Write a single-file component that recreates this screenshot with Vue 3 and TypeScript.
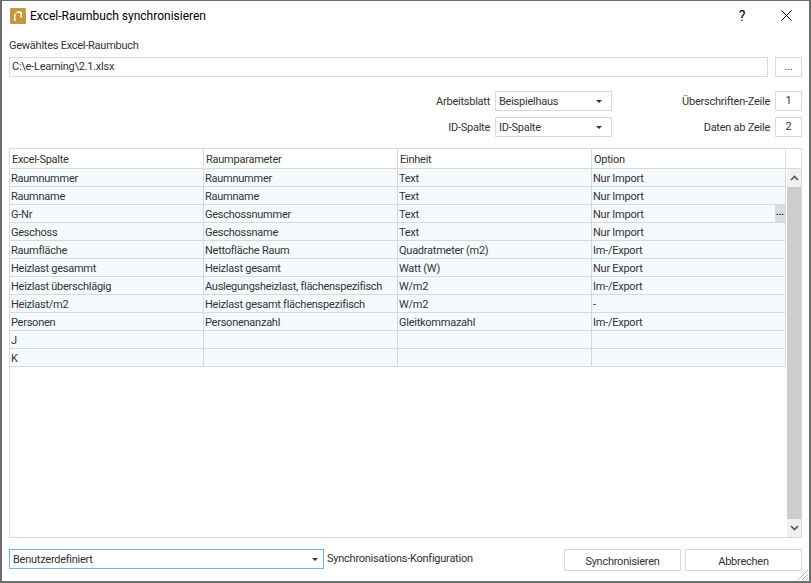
<script setup lang="ts">
const columns = ['Excel-Spalte', 'Raumparameter', 'Einheit', 'Option']

const rows: string[][] = [
  ['Raumnummer', 'Raumnummer', 'Text', 'Nur Import'],
  ['Raumname', 'Raumname', 'Text', 'Nur Import'],
  ['G-Nr', 'Geschossnummer', 'Text', 'Nur Import'],
  ['Geschoss', 'Geschossname', 'Text', 'Nur Import'],
  ['Raumfläche', 'Nettofläche Raum', 'Quadratmeter (m2)', 'Im-/Export'],
  ['Heizlast gesammt', 'Heizlast gesamt', 'Watt (W)', 'Nur Export'],
  ['Heizlast überschlägig', 'Auslegungsheizlast, flächenspezifisch', 'W/m2', 'Im-/Export'],
  ['Heizlast/m2', 'Heizlast gesamt flächenspezifisch', 'W/m2', '-'],
  ['Personen', 'Personenanzahl', 'Gleitkommazahl', 'Im-/Export'],
  ['J', '', '', ''],
  ['K', '', '', ''],
]
</script>

<template>
  <div class="dialog">
    <header class="titlebar">
      <svg class="app-icon" viewBox="0 0 16 16" aria-hidden="true">
        <rect width="16" height="16" rx="1" fill="#c4983f" />
        <path d="M4 13V6.5L5.5 5V13zM6.5 4.2C8 3 10.5 3 12 4.5V9.5H10.5V5.5C9.5 4.8 8 4.8 6.5 5.4z" fill="#fff" />
      </svg>
      <span class="title">Excel-Raumbuch synchronisieren</span>
      <span class="help">?</span>
      <svg class="close" viewBox="0 0 11 11" aria-hidden="true">
        <path d="M0.5 0.5L10.5 10.5M10.5 0.5L0.5 10.5" />
      </svg>
    </header>

    <main class="content">
      <label class="file-label">Gewähltes Excel-Raumbuch</label>
      <div class="file-row">
        <div class="box file-input">C:\e-Learning\2.1.xlsx</div>
        <button class="box browse" type="button">...</button>
      </div>

      <div class="options">
        <span class="opt-label">Arbeitsblatt</span>
        <div class="box combo">
          <span>Beispielhaus</span>
          <i class="caret"></i>
        </div>
        <span class="opt-label num-label">Überschriften-Zeile</span>
        <div class="box num">1</div>

        <span class="opt-label">ID-Spalte</span>
        <div class="box combo">
          <span>ID-Spalte</span>
          <i class="caret"></i>
        </div>
        <span class="opt-label num-label">Daten ab Zeile</span>
        <div class="box num">2</div>
      </div>

      <div class="grid-wrap">
        <div class="grid-main">
          <div class="grid-row grid-head">
            <div v-for="c in columns" :key="c" class="cell">{{ c }}</div>
            <div class="corner"></div>
          </div>
          <div class="grid-scroll">
            <div class="grid-rows">
              <div v-for="(row, i) in rows" :key="i" class="grid-row data-row">
                <div v-for="(val, j) in row" :key="j" class="cell">
                  {{ val }}
                  <span v-if="i === 2 && j === 3" class="cell-btn">...</span>
                </div>
              </div>
            </div>
            <div class="scrollbar">
              <svg class="arrow" viewBox="0 0 9 6" aria-hidden="true">
                <path d="M1 5L4.5 1.5L8 5" />
              </svg>
              <div class="thumb"></div>
              <svg class="arrow" viewBox="0 0 9 6" aria-hidden="true">
                <path d="M1 1L4.5 4.5L8 1" />
              </svg>
            </div>
          </div>
        </div>
      </div>

      <footer class="footer">
        <div class="box combo config">
          <span>Benutzerdefiniert</span>
          <i class="caret"></i>
        </div>
        <span class="config-label">Synchronisations-Konfiguration</span>
        <button class="box action first" type="button">Synchronisieren</button>
        <button class="box action" type="button">Abbrechen</button>
      </footer>
    </main>

    <svg class="grip" viewBox="0 0 12 12" aria-hidden="true">
      <path d="M11 1L1 11M11 5L5 11M11 9L9 11" />
    </svg>
  </div>
</template>

<style scoped>
.dialog {
  position: relative;
  width: 811px;
  height: 583px;
  box-sizing: border-box;
  border: 1px solid #6e6e6e;
  border-width: 1px 2px 2px 2px;
  background: #fff;
  display: flex;
  flex-direction: column;
  font-family: Roboto, 'Open Sans', sans-serif;
  font-size: 11px;
  letter-spacing: -0.25px;
  color: #333;
  overflow: hidden;
}

.titlebar {
  height: 29px;
  flex: none;
  display: flex;
  align-items: center;
  padding-left: 8px;
  color: #000;
}
.app-icon {
  width: 16px;
  height: 16px;
  margin-right: 4px;
}
.title {
  flex: 1;
  font-size: 12px;
  letter-spacing: 0;
}
.help {
  font-size: 14px;
  width: 12px;
  margin-right: 33px;
  text-align: center;
}
.close {
  width: 11px;
  height: 11px;
  margin-right: 17px;
  stroke: #000;
  stroke-width: 1;
  fill: none;
}

.content {
  flex: 1;
  display: flex;
  flex-direction: column;
  padding: 8px 7px 0;
  min-height: 0;
}

.box {
  box-sizing: border-box;
  border: 1px solid #d9d9d9;
  background: #fff;
  font: inherit;
  letter-spacing: inherit;
  color: inherit;
}

.file-label {
  height: 19px;
  line-height: 15px;
}
.file-row {
  display: flex;
  gap: 7px;
  height: 20px;
}
.file-input {
  flex: 1;
  padding-left: 2px;
  line-height: 17px;
}
.browse {
  width: 27px;
  padding: 0;
  line-height: 18px;
}

.options {
  display: grid;
  grid-template-columns: 1fr 117px 163px 27px;
  grid-template-rows: 20px 20px;
  row-gap: 6px;
  margin-top: 14px;
  align-items: center;
}
.opt-label {
  text-align: right;
  padding-right: 5px;
  line-height: 19px;
}
.combo {
  height: 20px;
  display: flex;
  align-items: center;
  justify-content: space-between;
  padding: 0 9px 0 3px;
}
.caret {
  width: 0;
  height: 0;
  border-left: 3px solid transparent;
  border-right: 3px solid transparent;
  border-top: 3px solid #333;
}
.num {
  height: 20px;
  line-height: 17px;
  text-align: center;
}

.grid-wrap {
  margin-top: 11px;
  height: 390px;
  box-sizing: border-box;
  border: 1px solid #d9d9d9;
}
.grid-main {
  height: 100%;
  display: flex;
  flex-direction: column;
}
.grid-row {
  display: grid;
  grid-template-columns: repeat(4, 194px);
}
.grid-head {
  grid-template-columns: repeat(4, 194px) 1fr;
  height: 20px;
  flex: none;
  box-sizing: border-box;
  border-bottom: 1px solid #d9d9d9;
}
.grid-head .cell {
  padding-left: 2px;
  padding-top: 1px;
  line-height: 19px;
  background: #fff;
}
.corner {
  background: #fff;
}
.grid-scroll {
  flex: 1;
  display: flex;
  min-height: 0;
}
.grid-rows {
  width: 776px;
  flex: none;
}
.data-row {
  height: 18px;
  box-sizing: border-box;
  border-bottom: 1px solid #d9d9d9;
  background: #f5faff;
}
.cell {
  position: relative;
  box-sizing: border-box;
  border-right: 1px solid #d9d9d9;
  padding-left: 1px;
  padding-top: 1px;
  line-height: 17px;
  white-space: nowrap;
  overflow: hidden;
}
.cell-btn {
  position: absolute;
  right: 0;
  top: 0;
  width: 10px;
  height: 17px;
  background: #dcdcdc;
  color: #000;
  text-align: center;
  font-size: 9px;
  font-weight: 700;
  letter-spacing: 0;
  line-height: 15px;
}

.scrollbar {
  flex: 1;
  margin-left: 1px;
  background: #f0f0f0;
  display: flex;
  flex-direction: column;
  align-items: center;
  justify-content: space-between;
}
.arrow {
  width: 9px;
  height: 6px;
  flex: none;
  margin: 6px 0;
  fill: none;
  stroke: #555;
  stroke-width: 1.6;
}
.thumb {
  flex: 1;
  align-self: stretch;
  background: #cdcdcd;
}

.footer {
  display: flex;
  margin-top: 11px;
  height: 22px;
}
.config {
  width: 315px;
  height: 20px;
  border-color: #66b9e2;
  padding-right: 5px;
}
.config-label {
  margin-left: 3px;
  flex: 1;
  line-height: 20px;
}
.action {
  width: 117px;
  text-align: center;
  padding: 2px 0 0;
}
.action.first {
  margin-right: 4px;
}

.grip {
  position: absolute;
  right: 0;
  bottom: 0;
  width: 12px;
  height: 12px;
  fill: none;
  stroke: #b0b0b0;
  stroke-width: 1;
}
</style>
